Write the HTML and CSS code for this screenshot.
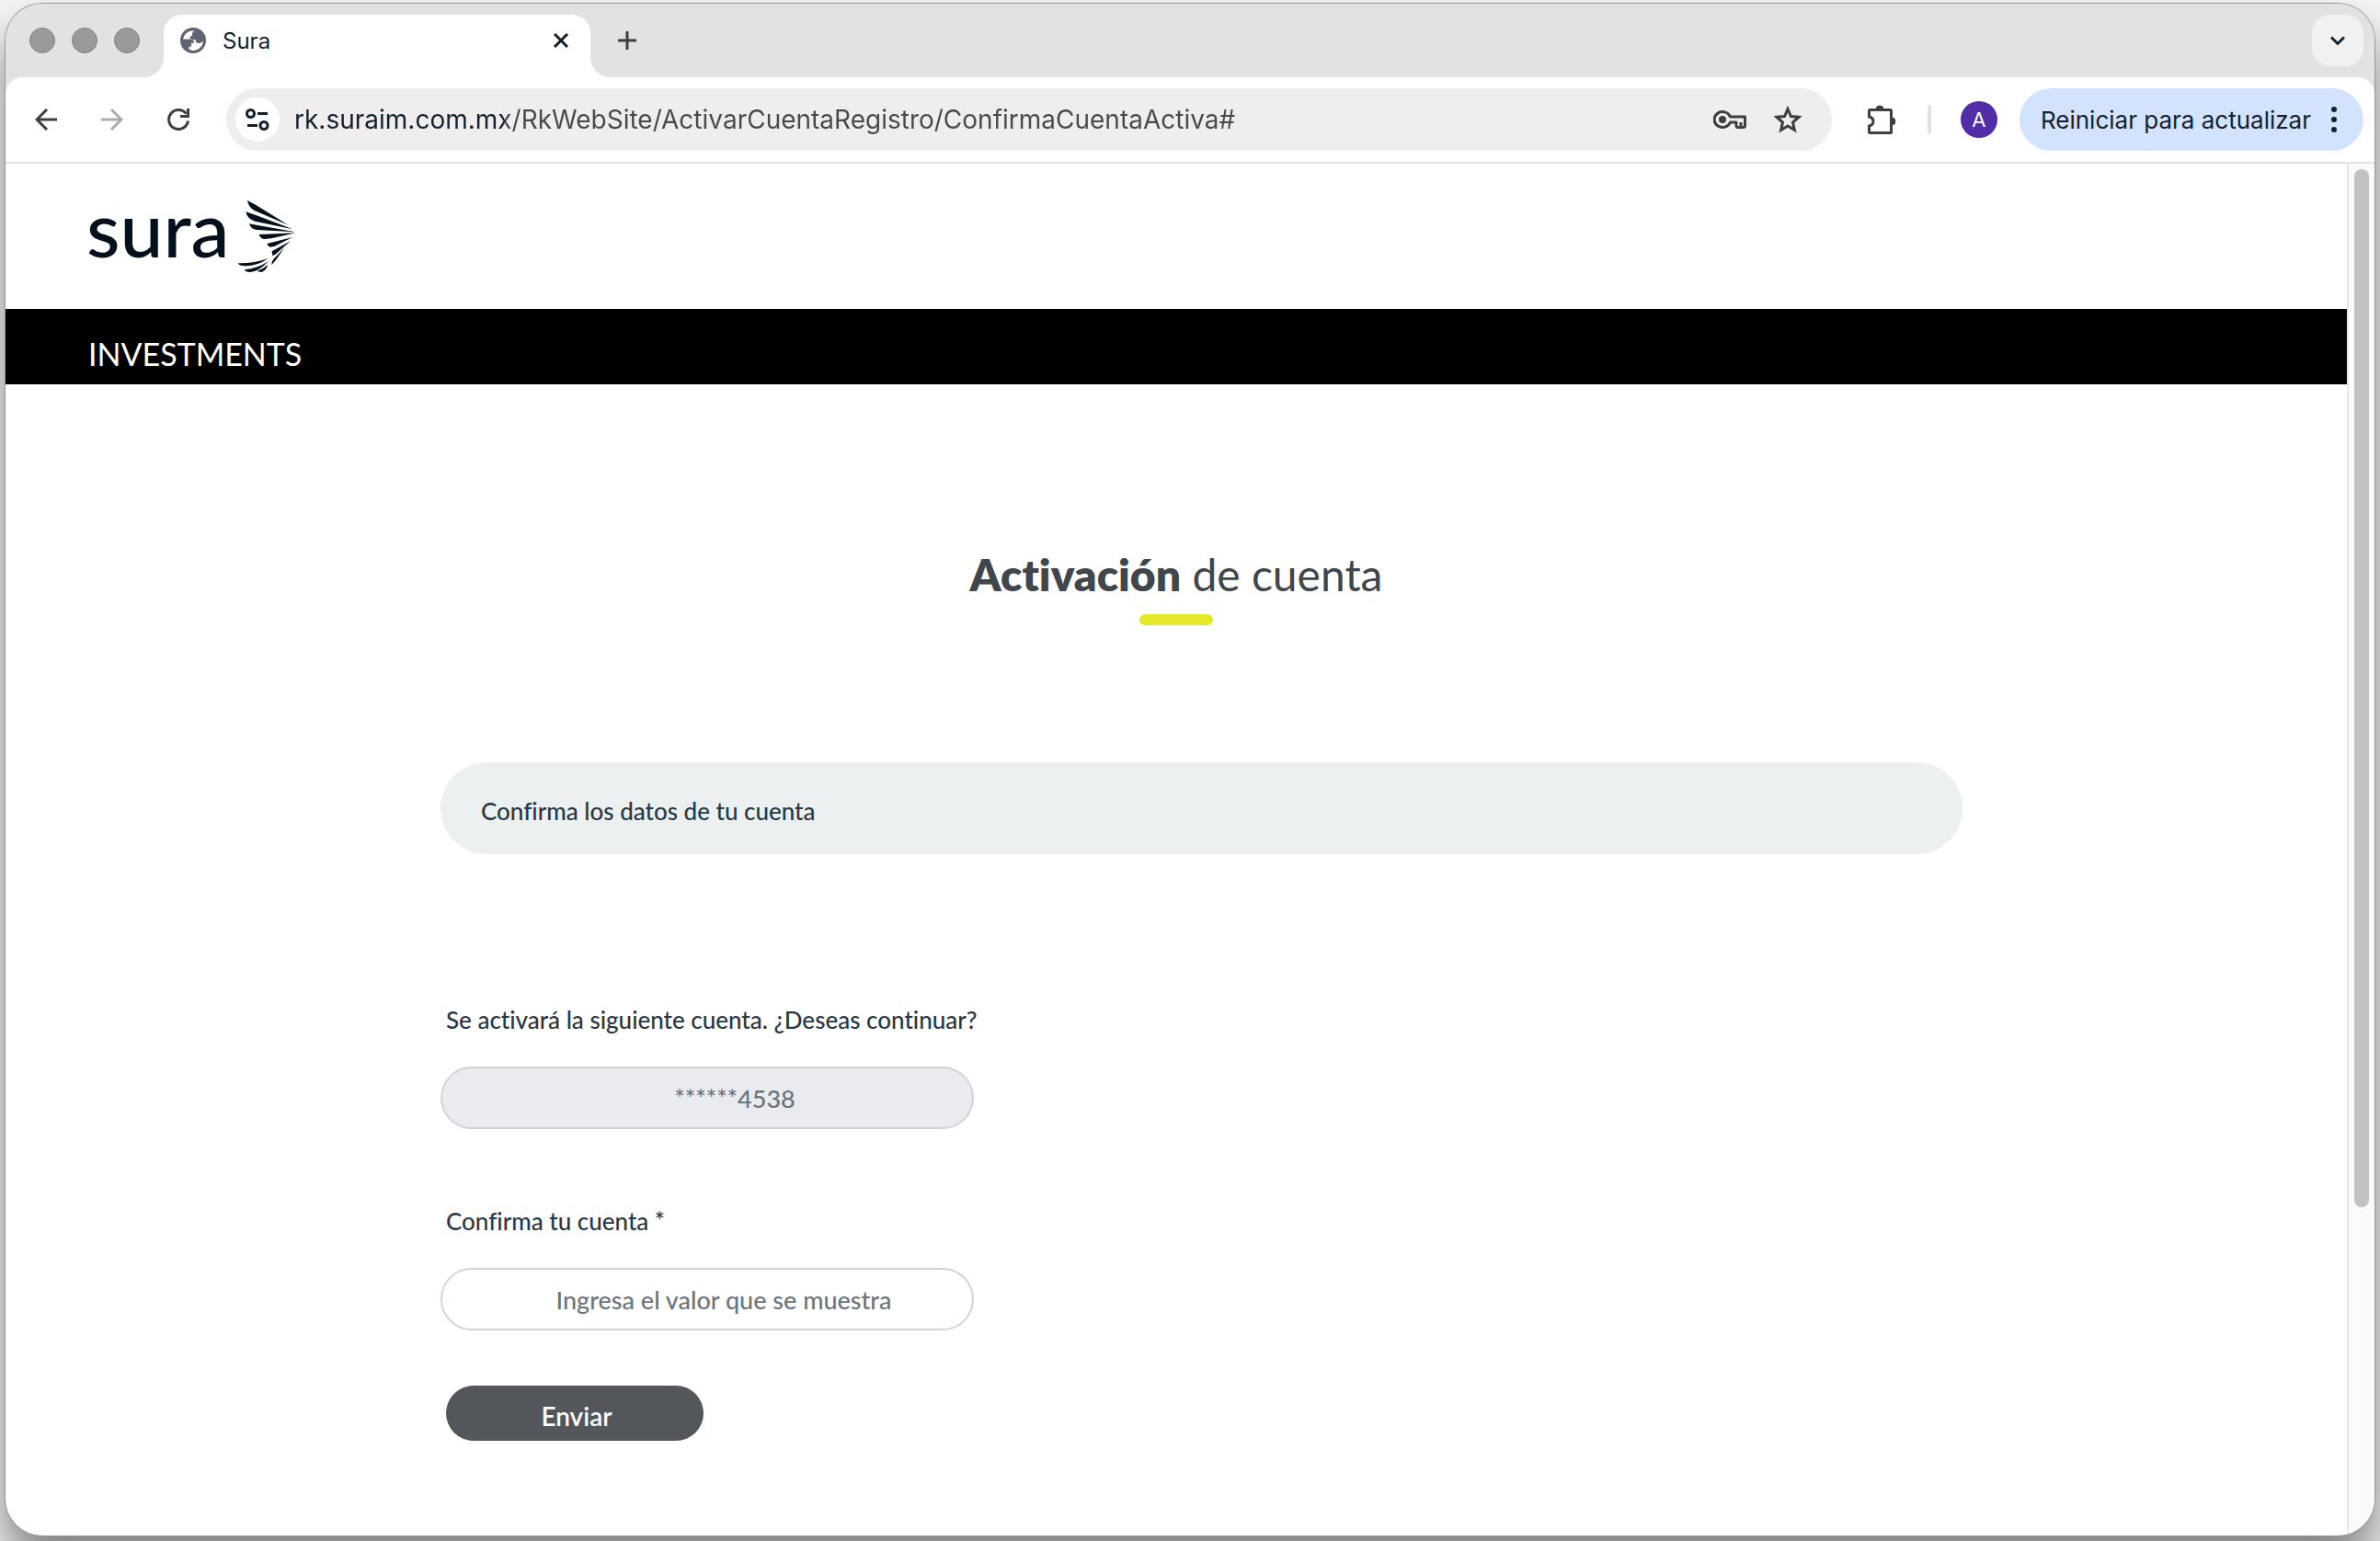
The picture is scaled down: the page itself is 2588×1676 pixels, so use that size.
FILE: index.html
```
<!DOCTYPE html>
<html lang="es">
<head>
  <meta charset="utf-8">
  <title>Sura</title>
  <link rel="stylesheet" href="styles.css">
</head>
<body>
  <div class="window">
    <div class="tabstrip">
      <div class="lights"><span class="light"></span><span class="light"></span><span class="light"></span></div>
      <div class="tab">
        <svg viewBox="0 0 28 28" width="28" height="28">
          <circle cx="14" cy="14" r="14" fill="#5f6470"/>
          <path d="M15.500 3.200c-1.500 1-2.500 2-2.500 4.300 0 1.500-.8 2.200-2.500 2.200v2.800H3.300C4 7 8.500 3 15.500 3.200z" fill="#fff"/>
          <path d="M3.100 12.300h7.400c3 0 4.500 1.500 4.500 4.500h-3v4h-2.600v3c1.500.8 3 1.100 4.600 1.100 6 0 10.900-4.600 10.900-10.600-1 1.800-2.500 2.700-4.800 2.700-2.700 0-3.400-1.200-3.400-3.700h-3.400c-2.300 0-3.200-1-3.200-3.600z" fill="#fff"/>
        </svg>
        <span class="tab-title">Sura</span>
        <button class="icon" aria-label="Cerrar pestaña">
          <svg viewBox="0 0 16 16" width="16" height="16"><path d="M1 1l14 14M15 1L1 15" stroke="#14202e" stroke-width="3"/></svg>
        </button>
      </div>
      <button class="icon new-tab" aria-label="Nueva pestaña">
        <svg viewBox="0 0 20 20" width="20" height="20"><path d="M10 0v20M0 10h20" stroke="#3c4043" stroke-width="3"/></svg>
      </button>
      <button class="icon tab-search" aria-label="Buscar pestañas">
        <svg viewBox="0 0 16 11" width="16" height="11"><path d="M1 1.500l7 7 7-7" fill="none" stroke="#14202e" stroke-width="3"/></svg>
      </button>
    </div>

    <div class="toolbar">
      <div class="nav">
        <button class="icon" aria-label="Atrás">
          <svg viewBox="0 0 24 24" width="24" height="24"><path d="M24 12H2M13 1L2 12l11 11" fill="none" stroke="#3c4043" stroke-width="3"/></svg>
        </button>
        <button class="icon" aria-label="Adelante">
          <svg viewBox="0 0 24 24" width="24" height="24"><path d="M0 12h22M11 1l11 11-11 11" fill="none" stroke="#aaadaf" stroke-width="3"/></svg>
        </button>
        <button class="icon" aria-label="Recargar">
          <svg viewBox="0 0 24 24" width="24" height="24"><path d="M22.500 13.500A10.500 10.500 0 1 1 20.500 5.700" fill="none" stroke="#3c4043" stroke-width="3"/><path d="M22.500 0v8.500H14" fill="none" stroke="#3c4043" stroke-width="3"/></svg>
        </button>
      </div>
      <div class="omnibox">
        <button class="icon site-info" aria-label="Información del sitio">
          <svg viewBox="0 0 26 24" width="26" height="24" fill="none" stroke="#14202e" stroke-width="3"><circle cx="5.500" cy="5.500" r="4"/><path d="M13 5.500h11M2 18.500h11"/><circle cx="20" cy="18.500" r="4"/></svg>
        </button>
        <input class="url" type="text" aria-label="Dirección" value="rk.suraim.com.mx/RkWebSite/ActivarCuentaRegistro/ConfirmaCuentaActiva#">
        <button class="icon" aria-label="Contraseñas">
          <svg viewBox="0 0 36 20" width="36" height="20"><g fill="none" stroke="#3c4043" stroke-width="3"><path d="M18.500 7a9 8.500 0 1 0 0 6h6.500v3.500q0 2 2 2h5.500q2 0 2-2V7z" stroke-linejoin="round"/><path d="M30 13v5"/></g><circle cx="10" cy="10" r="4" fill="#3c4043"/></svg>
        </button>
        <button class="icon" aria-label="Favorito">
          <svg viewBox="0 0 30 30" width="30" height="30"><path d="M15 3.500l3.400 8 8.600.8-6.500 5.700 1.900 8.500-7.400-4.500-7.400 4.500 1.900-8.500-6.500-5.700 8.600-.8z" fill="none" stroke="#3c4043" stroke-width="3"/></svg>
        </button>
      </div>
      <button class="icon extensions" aria-label="Extensiones">
        <svg viewBox="0 0 32 32" width="32" height="32"><path d="M3.500 5.500h22q1 0 1 1v23q0 1-1 1h-22q-1 0-1-1v-6.500q4.500-1 4.500-5t-4.500-5V6.500q0-1 1-1z" fill="none" stroke="#3c4043" stroke-width="3"/><path d="M10 5a4 4 0 0 1 8 0zM27 14a4 4 0 0 1 0 8z" fill="#3c4043" stroke="#3c4043"/></svg>
      </button>
      <span class="divider"></span>
      <button class="avatar" aria-label="Perfil">A</button>
      <button class="update">
        Reiniciar para actualizar
        <svg viewBox="0 0 6 28" width="6" height="28" fill="#14202e"><circle cx="3" cy="3" r="3"/><circle cx="3" cy="14" r="3"/><circle cx="3" cy="25" r="3"/></svg>
      </button>
    </div>

    <div class="viewport">
      <main class="page">
        <header class="header">
          <span class="wordmark">sura</span>
          <svg class="wing" viewBox="24 36 192 240" width="64" height="80" fill="#04101c">
            <path d="M57 36L84 50 190 116 80 69Q60 58 57 36z"/>
            <path d="M52 73L85 84 205 130 82 104Q56 96 52 73z"/>
            <path d="M63 112L95 118 214 139 88 132Q68 130 63 112z"/>
            <path d="M95 147L214 142 135 160 112 162Q99 160 95 147z"/>
            <path d="M121 177L204 156 145 186 130 188Q124 186 121 177z"/>
            <path d="M137 202L198 168 150 211 139 217z"/>
            <path d="M136 247Q134 238 142 228L178 190 152 228z"/>
            <path d="M26 241Q80 242 125 225 90 250 50 250 30 250 26 241z"/>
            <path d="M48 262Q90 258 126 234 95 268 66 270 50 270 48 262z"/>
            <path d="M88 267Q110 258 124 246 120 262 104 270z"/>
          </svg>
        </header>
        <div class="band">INVESTMENTS</div>

        <h1 class="title"><b>Activación</b> de cuenta</h1>

        <div class="content">
          <div class="banner">Confirma los datos de tu cuenta</div>
          <form class="form">
            <label class="label" for="cuenta">Se activará la siguiente cuenta. ¿Deseas continuar?</label>
            <input class="field field-masked" id="cuenta" type="text" value="******4538" disabled>
            <label class="label" for="confirma">Confirma tu cuenta *</label>
            <input class="field" id="confirma" type="text" placeholder="Ingresa el valor que se muestra">
            <button class="submit" type="button">Enviar</button>
          </form>
        </div>
      </main>
      <div class="scrollbar"><div class="thumb"></div></div>
    </div>
  </div>
</body>
</html>
```
FILE: styles.css
```
* {
  box-sizing: border-box;
}
body {
  display: flex;
  min-height: 100vh;
  margin: 0;
  padding: 4px 6px 6px;
  font-family: Lato, sans-serif;
  font-variant-ligatures: none;
  background: #f6f6f6;
}
button {
  font-family: inherit;
  border: 0;
  cursor: pointer;
}
svg {
  display: block;
  flex: none;
}
.window {
  flex: 1;
  display: flex;
  flex-direction: column;
  overflow: hidden;
  border-radius: 40px;
  background: #fff;
  box-shadow: 0 0 0 1px #999, 0 30px 50px rgba(0, 0, 0, 0.5);
}
.icon {
  display: flex;
  align-items: center;
  justify-content: center;
  padding: 0;
  background: none;
}

/* tab strip */
.tabstrip {
  display: flex;
  align-items: center;
  height: 80px;
  padding: 0 12px 0 26px;
  font-family: Inter, sans-serif;
  background: #e2e2e2;
}
.lights {
  display: flex;
  gap: 18px;
}
.light {
  width: 28px;
  height: 28px;
  border: 1px solid #7e7f82;
  border-radius: 50%;
  background: #999a9c;
}
.tab {
  position: relative;
  display: flex;
  align-items: center;
  align-self: flex-end;
  width: 464px;
  height: 68px;
  margin-left: 26px;
  padding: 0 24px 12px 18px;
  border-radius: 20px 20px 0 0;
  background: #fff;
}
.tab::before,
.tab::after {
  content: '';
  position: absolute;
  bottom: 0;
  width: 22px;
  height: 22px;
}
.tab::before {
  left: -22px;
  background: radial-gradient(circle at 0 0, #e2e2e2 22px, #fff 22px);
}
.tab::after {
  right: -22px;
  background: radial-gradient(circle at 100% 0, #e2e2e2 22px, #fff 22px);
}
.tab-title {
  flex: 1;
  margin-left: 18px;
  font-size: 24px;
  color: #14202e;
}
.new-tab {
  margin-left: 30px;
}
.tab-search {
  width: 56px;
  height: 56px;
  margin-left: auto;
  border-radius: 20px;
  background: #f1f1f1;
}

/* toolbar */
.toolbar {
  display: flex;
  align-items: center;
  height: 94px;
  padding: 0 12px 0 32px;
  font-family: Inter, sans-serif;
  border-bottom: 2px solid #e2e2e2;
  border-radius: 18px 18px 0 0;
  background: #fff;
  box-shadow: 0 -20px 0 20px #e2e2e2;
  clip-path: inset(0);
}
.nav {
  display: flex;
  gap: 48px;
  margin-right: 40px;
}
.omnibox {
  flex: 1;
  display: flex;
  align-items: center;
  gap: 30px;
  height: 68px;
  padding: 0 33px 0 10px;
  border-radius: 34px;
  background: #efedee;
}
.site-info {
  width: 48px;
  height: 48px;
  margin-right: -14px;
  border-radius: 50%;
  background: #fff;
}
/* the host is darker than the rest of the address */
.url {
  flex: 1;
  min-width: 0;
  padding: 0;
  border: 0;
  font: 28px Inter, sans-serif;
  color: transparent;
  background: linear-gradient(90deg, #14202e 229px, #47494c 229px);
  -webkit-background-clip: text;
  background-clip: text;
}
.extensions {
  margin-left: 38px;
}
.divider {
  width: 4px;
  height: 32px;
  margin: 0 32px 0 34px;
  border-radius: 2px;
  background: #e2e2e2;
}
.avatar {
  width: 40px;
  height: 40px;
  padding: 0;
  border-radius: 50%;
  font-size: 22px;
  color: #fff;
  background: #512da8;
}
.update {
  display: flex;
  align-items: center;
  gap: 22px;
  height: 68px;
  margin-left: 24px;
  padding: 0 29px 0 23px;
  border-radius: 34px;
  font-size: 26px;
  white-space: nowrap;
  color: #14202e;
  background: #d3e3fd;
}

/* page */
.viewport {
  flex: 1;
  display: flex;
}
.page {
  flex: 1;
}
.scrollbar {
  display: grid;
  grid-template-rows: 76fr 24fr;
  width: 30px;
  padding: 6px 6px 0;
  border-left: 2px solid #e8e8e8;
  background: #fafafa;
}
.thumb {
  width: 16px;
  border-radius: 8px;
  background: #c1c1c1;
}
.header {
  display: flex;
  gap: 8px;
  height: 158px;
  padding: 30px 88px 0;
}
.wordmark {
  font-size: 84px;
  font-weight: 500;
  line-height: 80px;
  color: #04101c;
}
.wing {
  margin-top: 10px;
}
.band {
  display: flex;
  align-items: center;
  height: 82px;
  padding: 14px 90px 0;
  font-size: 34px;
  color: #fff;
  background: #000;
}
.title {
  margin: 177px 0 0;
  font-size: 48px;
  font-weight: 400;
  line-height: 60px;
  text-align: center;
  color: #3f464c;
}
.title b {
  font-weight: 800;
}
.title::after {
  content: '';
  display: block;
  width: 80px;
  height: 12px;
  margin: 13px auto 0;
  border-radius: 6px;
  background: #e3e829;
}
.content {
  width: 65%;
  margin: 149px 0 0 473px;
}
.banner {
  display: flex;
  align-items: center;
  height: 100px;
  padding: 6px 44px 0;
  border-radius: 50px;
  font-size: 26px;
  font-weight: 500;
  color: #283845;
  background: #ecf0f1;
}
.form {
  display: flex;
  flex-direction: column;
  align-items: flex-start;
  margin-top: 80px;
}
.label {
  margin: 84px 6px 35px;
  font-size: 26px;
  font-weight: 500;
  line-height: 32px;
  color: #283845;
}
.field {
  width: 580px;
  height: 68px;
  padding: 0 24px 0 60px;
  border: 2px solid #ced4da;
  border-radius: 34px;
  font: 500 27px Lato, sans-serif;
  text-align: center;
  color: #6c757d;
  background: #fff;
}
.field::placeholder {
  color: #6c757d;
}
.field-masked {
  padding-right: 0;
  background: #e9ebef;
}
.submit {
  width: 280px;
  height: 60px;
  margin: 60px 6px;
  padding: 5px 0 0 4px;
  border-radius: 30px;
  font-size: 28px;
  font-weight: 600;
  color: #fff;
  background: #53565a;
}
```
